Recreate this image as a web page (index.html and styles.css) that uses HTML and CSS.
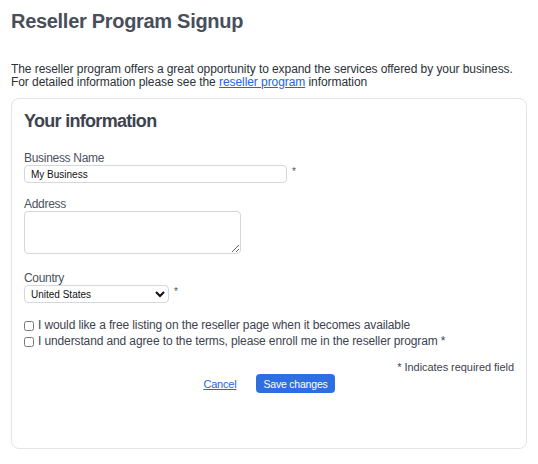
FILE: index.html
```html
<!DOCTYPE html>
<html>
<head>
<meta charset="utf-8">
<link rel="stylesheet" href="styles.css">
</head>
<body>
<h1 class="title">Reseller Program Signup</h1>
<p class="intro">The reseller program offers a great opportunity to expand the services offered by your business.<br>For detailed information please see the <a href="#" class="link">reseller program</a> information</p>
<form class="card">
  <h2 class="card-title">Your information</h2>
  <div class="field field-first">
    <label class="label">Business Name</label>
    <div class="control"><input class="input" type="text" value="My Business"><span class="req">*</span></div>
  </div>
  <div class="field field-address">
    <label class="label">Address</label>
    <div class="control"><textarea class="textarea"></textarea></div>
  </div>
  <div class="field field-country">
    <label class="label">Country</label>
    <div class="control"><select class="select"><option>United States</option></select><span class="req">*</span></div>
  </div>
  <div class="checks">
    <label class="check"><input type="checkbox" class="cb">I would like a free listing on the reseller page when it becomes available</label>
    <label class="check"><input type="checkbox" class="cb">I understand and agree to the terms, please enroll me in the reseller program *</label>
  </div>
  <p class="note">* Indicates required field</p>
  <div class="actions">
    <a href="#" class="cancel">Cancel</a>
    <button type="button" class="save">Save changes</button>
  </div>
</form>
</body>
</html>
```

FILE: styles.css
```css
body {
  margin: 0;
  padding: 0 11px;
  font-family: "Liberation Sans", Arial, sans-serif;
  color: #2d3138;
  background: #fff;
}
.title {
  margin: 9px 0 0;
  font-size: 20px;
  line-height: 24px;
  font-weight: bold;
  letter-spacing: -0.3px;
  color: #484e5a;
}
.intro {
  margin: 30px 0 0;
  font-size: 12px;
  line-height: 13px;
  letter-spacing: -0.07px;
  color: #2d3138;
}
.link {
  color: #2563eb;
  text-decoration: underline;
}
.card {
  margin-top: 9px;
  height: 351px;
  box-sizing: border-box;
  border: 1px solid #e2e4e8;
  border-radius: 8px;
  padding: 11px 12px;
  display: flex;
  flex-direction: column;
}
.card-title {
  margin: 0;
  font-size: 18px;
  line-height: 22px;
  font-weight: bold;
  letter-spacing: -0.7px;
  color: #3d4350;
}
.field {
  display: flex;
  flex-direction: column;
}
.field-first { margin-top: 19px; }
.field-address { margin-top: 14px; }
.field-country { margin-top: 17px; }
.label {
  font-size: 12px;
  line-height: 14px;
  letter-spacing: -0.3px;
  color: #4b5260;
}
.control {
  display: flex;
  align-items: flex-start;
  margin-top: 0;
}
.input {
  width: 263px;
  height: 18px;
  box-sizing: border-box;
  border: 1px solid #d4d7dc;
  border-radius: 4px;
  padding: 0 6px;
  margin: 0;
  font-family: "Liberation Sans", Arial, sans-serif;
  font-size: 10px;
  color: #111;
}
.textarea {
  width: 217px;
  height: 43px;
  box-sizing: border-box;
  border: 1px solid #d4d7dc;
  border-radius: 4px;
  margin: 0;
}
.select {
  width: 145px;
  height: 18px;
  box-sizing: border-box;
  border: 1px solid #d4d7dc;
  border-radius: 4px;
  padding: 0 2px;
  margin: 0;
  background: #fff;
  font-family: "Liberation Sans", Arial, sans-serif;
  font-size: 10px;
  color: #111;
}
.req {
  margin-left: 5px;
  font-size: 10px;
  line-height: 14px;
  color: #555;
}
.checks {
  margin-top: 16px;
  display: flex;
  flex-direction: column;
  gap: 3px;
}
.check {
  display: flex;
  align-items: center;
  font-size: 12px;
  line-height: 13px;
  letter-spacing: -0.12px;
  color: #3d4350;
}
.cb {
  width: 10px;
  height: 10px;
  margin: 0 4px 0 0;
}
.note {
  margin: 13px 0 0;
  text-align: right;
  font-size: 11px;
  line-height: 13px;
  letter-spacing: -0.05px;
  color: #3d4350;
}
.actions {
  margin-top: 0;
  display: flex;
  justify-content: center;
  align-items: center;
  gap: 20px;
}
.cancel {
  font-size: 11px;
  letter-spacing: -0.2px;
  color: #2563eb;
  text-decoration: underline;
}
.save {
  background: #2f6ee0;
  color: #fff;
  border: none;
  border-radius: 4px;
  height: 19px;
  padding: 0 7px;
  font-family: "Liberation Sans", Arial, sans-serif;
  font-size: 10.5px;
  letter-spacing: -0.2px;
}
```
